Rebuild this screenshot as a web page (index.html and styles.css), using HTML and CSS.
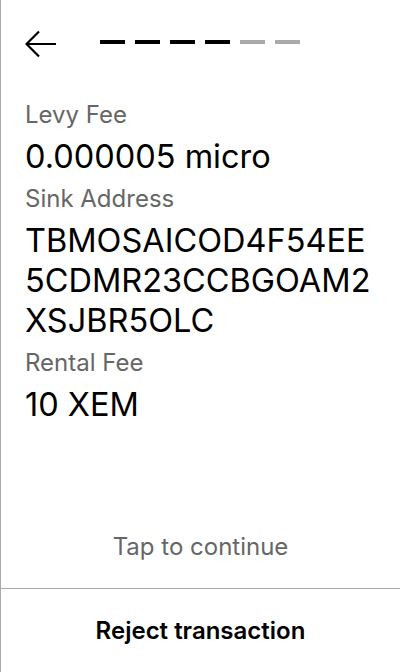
FILE: index.html
```html
<!DOCTYPE html>
<html>
<head>
<meta charset="utf-8">
<link rel="stylesheet" href="styles.css">
</head>
<body>
<div class="screen">
  <header class="header">
    <svg class="back" width="32" height="28" viewBox="0 0 32 28">
      <path d="M31 14 H2 M14 1.5 L1.5 14 L14 26.5" fill="none" stroke="#000" stroke-width="2.2"/>
    </svg>
    <div class="steps">
      <span class="step done"></span>
      <span class="step done"></span>
      <span class="step done"></span>
      <span class="step done"></span>
      <span class="step"></span>
      <span class="step"></span>
    </div>
  </header>
  <main class="content">
    <div class="label">Levy Fee</div>
    <div class="value">0.000005 micro</div>
    <div class="label">Sink Address</div>
    <div class="value">TBMOSAICOD4F54EE<br>5CDMR23CCBGOAM2<br>XSJBR5OLC</div>
    <div class="label">Rental Fee</div>
    <div class="value">10 XEM</div>
  </main>
  <div class="tap">Tap to continue</div>
  <div class="reject">Reject transaction</div>
</div>
</body>
</html>
```
FILE: styles.css
```css
html, body {
  margin: 0;
  padding: 0;
  background: #fff;
}
.screen {
  box-sizing: border-box;
  width: 400px;
  height: 672px;
  border-left: 1px solid #aaaaaa;
  display: flex;
  flex-direction: column;
  font-family: Inter, "Noto Sans", sans-serif;
  color: #000;
}
.header {
  height: 86px;
  display: flex;
  align-items: center;
  padding-left: 24px;
  flex: none;
}
.back {
  display: block;
  margin-top: 1px;
}
.steps {
  display: flex;
  gap: 10px;
  margin-left: 43px;
  margin-top: -3px;
}
.step {
  width: 25px;
  height: 4px;
  background: #aaaaaa;
}
.step.done {
  background: #000;
}
.content {
  flex: 1;
  padding: 7px 24px 0;
}
.label {
  font-size: 24px;
  line-height: 29px;
  padding: 7px 0 8px;
  color: #666;
}
.value {
  font-size: 32.5px;
  line-height: 40px;
  color: #000;
}
.tap {
  text-align: center;
  font-size: 24px;
  line-height: 29px;
  color: #666;
  padding-bottom: 27px;
}
.reject {
  height: 83px;
  border-top: 1px solid #aaaaaa;
  display: flex;
  align-items: center;
  justify-content: center;
  font-size: 24px;
  font-weight: 600;
  color: #000;
}
```
